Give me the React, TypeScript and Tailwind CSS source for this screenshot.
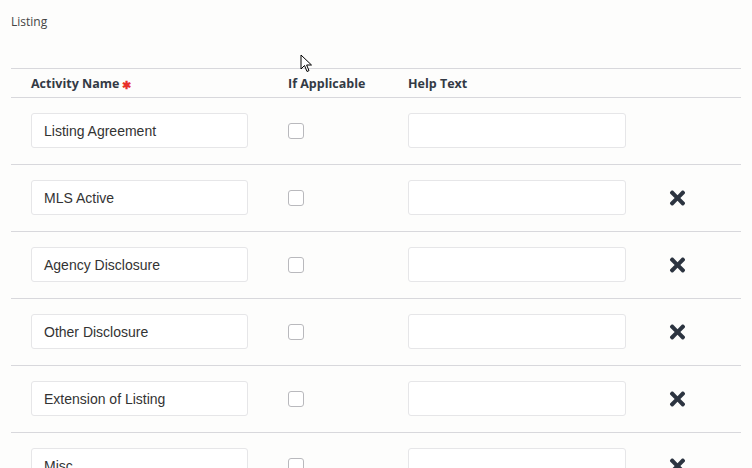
import { FaTimes } from 'react-icons/fa';

const rows = [
  { name: 'Listing Agreement', removable: false },
  { name: 'MLS Active', removable: true },
  { name: 'Agency Disclosure', removable: true },
  { name: 'Other Disclosure', removable: true },
  { name: 'Extension of Listing', removable: true },
  { name: 'Misc', removable: true },
];

export default function App() {
  return (
    <div className="relative h-[468px] w-[752px] overflow-hidden bg-[#fdfdfc] font-['Open_Sans',sans-serif] text-[#333]">
      <div className="px-[11px] pt-[13px]">
        <p className="text-[12px] leading-[18px] text-[#444]">Listing</p>

        {/* Table */}
        <div className="mt-[37px] w-[730px]">
          <div className="grid h-[30px] grid-cols-[257px_120px_260px_1fr] items-center border-y border-[#d8d8dc] pt-[2px] pl-[20px] text-[12.5px] font-bold text-[#333a45]">
            <div className="flex items-center gap-[3px]">
              Activity Name
              <span className="text-[11px] leading-none text-[#e8302a]">✱</span>
            </div>
            <div>If Applicable</div>
            <div>Help Text</div>
            <div />
          </div>

          {rows.map((row) => (
            <div
              key={row.name}
              className="grid grid-cols-[257px_120px_260px_1fr] items-center border-b border-[#d8d8dc] pt-[15px] pb-[16px] pl-[20px]"
            >
              <div className="flex h-[35px] w-[217px] items-center rounded-[3px] border border-[#e6e6e8] bg-white px-[12px] pt-[2px] font-['Liberation_Sans',sans-serif] text-[14px] text-[#333]">
                {row.name}
              </div>
              <div>
                <div className="h-[16px] w-[16px] rounded-[3px] border border-[#b9b9bd] bg-white" />
              </div>
              <div className="h-[35px] w-[218px] rounded-[3px] border border-[#e6e6e8] bg-white" />
              <div className="flex">
                {row.removable && <FaTimes className="h-[22px] w-[19px] text-[#2c3440]" />}
              </div>
            </div>
          ))}
        </div>
      </div>

      {/* mouse cursor */}
      <svg className="absolute left-[300px] top-[54px]" width="14" height="20" viewBox="0 0 14 20">
        <path d="M1 1 L1 15 L4.5 11.5 L7 17.5 L9 16.6 L6.6 11 L11.5 11 Z" fill="#fff" stroke="#000" strokeWidth="1" strokeLinejoin="round" />
      </svg>
    </div>
  );
}
